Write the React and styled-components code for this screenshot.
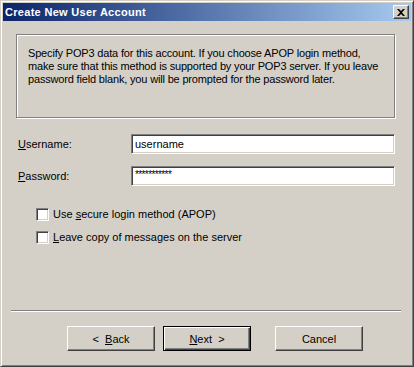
import styled, { createGlobalStyle } from "styled-components";

const GlobalStyle = createGlobalStyle`
  html, body { margin: 0; padding: 0; background: #d4d0c8; }
  body { font-family: "Liberation Sans", Arial, sans-serif; font-size: 11px; color: #000; }
`;

export default function App() {
  return (
    <>
      <GlobalStyle />
      <Window>
        <TitleBar>
          <Title>Create New User Account</Title>
          <CloseButton aria-label="close">
            <svg width="8" height="7" viewBox="0 0 8 7">
              <path d="M0 0h2l2 2 2-2h2L5 3.5 8 7H6L4 5 2 7H0l3-3.5z" fill="#000" />
            </svg>
          </CloseButton>
        </TitleBar>
        <Body>
          <InfoBox>
            Specify POP3 data for this account. If you choose APOP login method,<br />
            make sure that this method is supported by your POP3 server. If you leave<br />
            password field blank, you will be prompted for the password later.
          </InfoBox>
          <Form>
            <Label><u>U</u>sername:</Label>
            <Field>username</Field>
            <Label><u>P</u>assword:</Label>
            <Field $secret>***********</Field>
          </Form>
          <Checks>
            <CheckRow>
              <CheckBox />
              <span>Use <u>s</u>ecure login method (APOP)</span>
            </CheckRow>
            <CheckRow>
              <CheckBox />
              <span><u>L</u>eave copy of messages on the server</span>
            </CheckRow>
          </Checks>
          <Separator />
          <Buttons>
            <Button>&lt;&nbsp;&nbsp;<u>B</u>ack</Button>
            <Button $default><u>N</u>ext&nbsp;&nbsp;&gt;</Button>
            <Button $gap>Cancel</Button>
          </Buttons>
        </Body>
      </Window>
    </>
  );
}

const Window = styled.div`
  box-sizing: border-box;
  width: 414px;
  height: 367px;
  display: flex;
  flex-direction: column;
  background: #d4d0c8;
  border: 1px solid;
  border-color: #d4d0c8 #404040 #404040 #d4d0c8;
  box-shadow: inset 1px 1px #fff, inset -1px -1px #808080;
  padding: 2px;
`;

const TitleBar = styled.div`
  height: 18px;
  flex: none;
  display: flex;
  align-items: center;
  justify-content: space-between;
  padding: 0 2px;
  background: linear-gradient(to right, #0a246a, #a6caf0);
`;

const Title = styled.span`
  color: #fff;
  font-weight: bold;
  font-size: 11px;
  letter-spacing: 0.3px;
`;

const CloseButton = styled.div`
  box-sizing: border-box;
  width: 16px;
  height: 14px;
  display: flex;
  align-items: center;
  justify-content: center;
  background: #d4d0c8;
  border: 1px solid;
  border-color: #fff #404040 #404040 #fff;
  box-shadow: inset -1px -1px #808080;
`;

const Body = styled.div`
  flex: 1;
  display: flex;
  flex-direction: column;
`;

const InfoBox = styled.div`
  height: 84px;
  box-sizing: border-box;
  margin: 13px 16px 0 13px;
  padding: 12px 4px 0 11px;
  line-height: 13px;
  white-space: nowrap;
  letter-spacing: -0.17px;
  border: 1px solid #808080;
  box-shadow: inset 1px 1px #fff, 1px 1px #fff;
`;

const Form = styled.div`
  display: grid;
  grid-template-columns: 113px 264px;
  row-gap: 12px;
  align-items: center;
  margin: 16px 0 0 15px;
`;

const Label = styled.span`
  white-space: nowrap;
`;

const Field = styled.div`
  box-sizing: border-box;
  height: 20px;
  display: flex;
  align-items: center;
  padding: ${p => (p.$secret ? "0 3px 3px" : "0 3px")};
  background: #fff;
  border: 1px solid;
  border-color: #808080 #fff #fff #808080;
  box-shadow: inset 1px 1px #404040, inset -1px -1px #d4d0c8;
  font-size: ${p => (p.$secret ? "10px" : "11px")};
  letter-spacing: ${p => (p.$secret ? "-0.6px" : "0")};
`;

const Checks = styled.div`
  display: flex;
  flex-direction: column;
  gap: 10px;
  margin: 22px 0 0 33px;
`;

const CheckRow = styled.label`
  display: flex;
  align-items: center;
  gap: 4px;
  height: 13px;
  line-height: 13px;
`;

const CheckBox = styled.span`
  box-sizing: border-box;
  width: 13px;
  height: 13px;
  flex: none;
  background: #fff;
  border: 1px solid;
  border-color: #808080 #fff #fff #808080;
  box-shadow: inset 1px 1px #404040, inset -1px -1px #d4d0c8;
`;

const Separator = styled.div`
  margin: auto 10px 0 8px;
  height: 1px;
  background: #808080;
  border-bottom: 1px solid #fff;
`;

const Buttons = styled.div`
  display: flex;
  margin: 14px 0 13px 64px;
`;

const Button = styled.div`
  box-sizing: border-box;
  width: 88px;
  height: 25px;
  display: flex;
  align-items: center;
  justify-content: center;
  margin-left: ${p => (p.$gap ? "24px" : "8px")};
  &:first-child { margin-left: 0; }
  background: #d4d0c8;
  border: 1px solid;
  border-color: ${p => (p.$default ? "#000" : "#fff #404040 #404040 #fff")};
  box-shadow: ${p =>
    p.$default
      ? "inset 1px 1px #fff, inset -1px -1px #404040, inset -2px -2px #808080"
      : "inset -1px -1px #808080"};
`;
